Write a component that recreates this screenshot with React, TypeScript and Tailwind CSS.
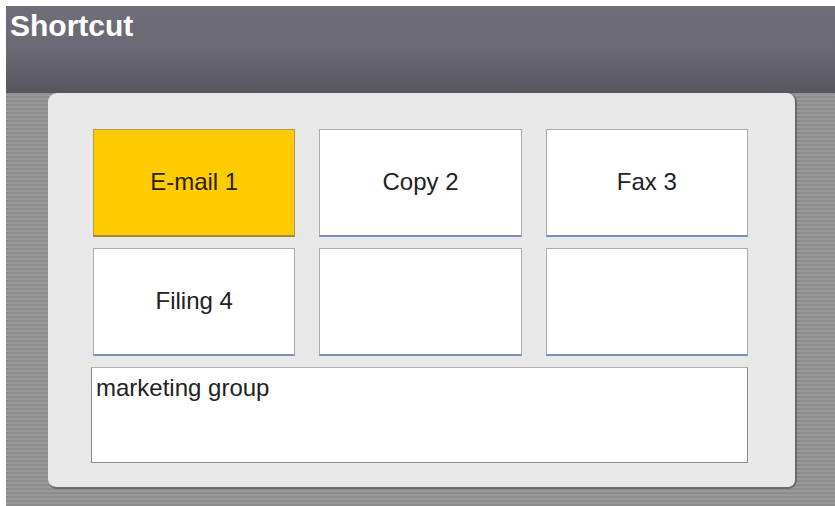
const buttons = [
  { label: 'E-mail 1', active: true },
  { label: 'Copy 2' },
  { label: 'Fax 3' },
  { label: 'Filing 4' },
  { label: '' },
  { label: '' },
]

function ShortcutButton({ label, active }: { label: string; active?: boolean }) {
  return (
    <div
      className={
        active
          ? 'h-[108px] flex items-center justify-center bg-[#ffcc00] border border-[#b09a4a] border-b-2 border-b-[#a08a3a] text-[#2a2200]'
          : 'h-[108px] flex items-center justify-center bg-white border border-[#a8a8b8] border-b-2 border-b-[#7d8cc4] text-[#222]'
      }
    >
      <span className="text-[24px] leading-none pb-[2px]">{label}</span>
    </div>
  )
}

export default function App() {
  return (
    <div
      className="w-[835px] h-[506px] bg-white pt-[6px] pl-[6px] flex flex-col overflow-hidden"
      style={{ fontFamily: '"Liberation Sans", Arial, sans-serif' }}
    >
      <header className="h-[87px] bg-gradient-to-b from-[#6f6d78] via-[#6b6974] to-[#57555e] px-[4px] pt-[5px]">
        <h1 className="text-[30px] font-bold text-white leading-none">Shortcut</h1>
      </header>

      <div className="flex-1 pl-[42px] pr-[38px] pb-[17px] bg-[repeating-linear-gradient(0deg,#8c8c8c_0px,#8c8c8c_2px,#999999_2px,#999999_4px)]">
        <div className="h-full bg-[#e8e8e8] rounded-[9px] border-r-2 border-b-2 border-[#6a6a6a] pl-[43px] pr-[47px] pt-[36px]">
          <div className="grid grid-cols-3 gap-x-[24px] gap-y-[11px] pl-[2px]">
            {buttons.map((b, i) => (
              <ShortcutButton key={i} label={b.label} active={b.active} />
            ))}
          </div>
          <div className="mt-[11px] h-[96px] bg-white border border-[#8a8a8a] border-t-[#b0b0b0] px-[4px] pt-[8px]">
            <span className="block text-[24px] leading-none text-[#222]">marketing group</span>
          </div>
        </div>
      </div>
    </div>
  )
}
